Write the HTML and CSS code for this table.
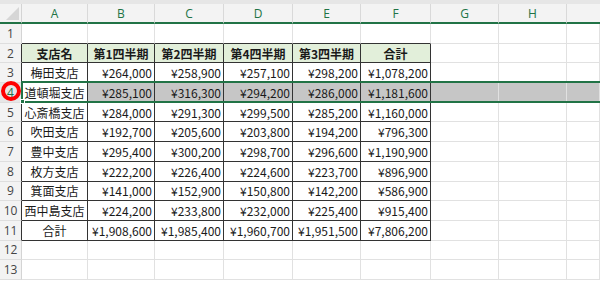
FILE: index.html
```html
<!DOCTYPE html>
<html lang="ja">
<head>
<meta charset="utf-8">
<link rel="stylesheet" href="styles.css">
</head>
<body>
<div class="sheet">
  <div class="topbar"></div>
  <div class="grid">
    <div class="corner"><span class="tri"></span></div>
    <div class="ch">A</div><div class="ch">B</div><div class="ch">C</div><div class="ch">D</div><div class="ch">E</div><div class="ch">F</div><div class="ch">G</div><div class="ch">H</div><div class="ch last"></div>

    <div class="rh">1</div>
    <div class="c top"></div><div class="c top"></div><div class="c top"></div><div class="c top"></div><div class="c top"></div><div class="c top"></div><div class="c"></div><div class="c"></div><div class="c"></div>

    <div class="rh edge">2</div>
    <div class="c t th">支店名</div><div class="c t th">第1四半期</div><div class="c t th">第2四半期</div><div class="c t th">第4四半期</div><div class="c t th">第3四半期</div><div class="c t th">合計</div><div class="c"></div><div class="c"></div><div class="c"></div>

    <div class="rh edge">3</div>
    <div class="c t ctr">梅田支店</div><div class="c t r">¥264,000</div><div class="c t r">¥258,900</div><div class="c t r">¥257,100</div><div class="c t r">¥298,200</div><div class="c t r">¥1,078,200</div><div class="c"></div><div class="c"></div><div class="c"></div>

    <div class="rh edge on">4</div>
    <div class="c t ctr">道頓堀支店</div><div class="c t r g">¥285,100</div><div class="c t r g">¥316,300</div><div class="c t r g">¥294,200</div><div class="c t r g">¥286,000</div><div class="c t r g">¥1,181,600</div><div class="c g"></div><div class="c g"></div><div class="c g"></div>

    <div class="rh edge">5</div>
    <div class="c t ctr">心斎橋支店</div><div class="c t r">¥284,000</div><div class="c t r">¥291,300</div><div class="c t r">¥299,500</div><div class="c t r">¥285,200</div><div class="c t r">¥1,160,000</div><div class="c"></div><div class="c"></div><div class="c"></div>

    <div class="rh edge">6</div>
    <div class="c t ctr">吹田支店</div><div class="c t r">¥192,700</div><div class="c t r">¥205,600</div><div class="c t r">¥203,800</div><div class="c t r">¥194,200</div><div class="c t r">¥796,300</div><div class="c"></div><div class="c"></div><div class="c"></div>

    <div class="rh edge">7</div>
    <div class="c t ctr">豊中支店</div><div class="c t r">¥295,400</div><div class="c t r">¥300,200</div><div class="c t r">¥298,700</div><div class="c t r">¥296,600</div><div class="c t r">¥1,190,900</div><div class="c"></div><div class="c"></div><div class="c"></div>

    <div class="rh edge">8</div>
    <div class="c t ctr">枚方支店</div><div class="c t r">¥222,200</div><div class="c t r">¥226,400</div><div class="c t r">¥224,600</div><div class="c t r">¥223,700</div><div class="c t r">¥896,900</div><div class="c"></div><div class="c"></div><div class="c"></div>

    <div class="rh edge">9</div>
    <div class="c t ctr">箕面支店</div><div class="c t r">¥141,000</div><div class="c t r">¥152,900</div><div class="c t r">¥150,800</div><div class="c t r">¥142,200</div><div class="c t r">¥586,900</div><div class="c"></div><div class="c"></div><div class="c"></div>

    <div class="rh edge">10</div>
    <div class="c t ctr">西中島支店</div><div class="c t r">¥224,200</div><div class="c t r">¥233,800</div><div class="c t r">¥232,000</div><div class="c t r">¥225,400</div><div class="c t r">¥915,400</div><div class="c"></div><div class="c"></div><div class="c"></div>

    <div class="rh edge">11</div>
    <div class="c t ctr">合計</div><div class="c t r">¥1,908,600</div><div class="c t r">¥1,985,400</div><div class="c t r">¥1,960,700</div><div class="c t r">¥1,951,500</div><div class="c t r">¥7,806,200</div><div class="c"></div><div class="c"></div><div class="c"></div>

    <div class="rh">12</div>
    <div class="c"></div><div class="c"></div><div class="c"></div><div class="c"></div><div class="c"></div><div class="c"></div><div class="c"></div><div class="c"></div><div class="c"></div>

    <div class="rh">13</div>
    <div class="c"></div><div class="c"></div><div class="c"></div><div class="c"></div><div class="c"></div><div class="c"></div><div class="c"></div><div class="c"></div><div class="c"></div>
  </div>
  <div class="selection"></div>
  <div class="handle"></div>
  <div class="mark"></div>
</div>
</body>
</html>
```
FILE: styles.css
```css
html, body {
  margin: 0;
  padding: 0;
  background: #ffffff;
  overflow: hidden;
}
.sheet {
  position: relative;
  width: 600px;
  height: 281px;
  overflow: hidden;
  font-family: "Noto Sans CJK JP", "Noto Sans", sans-serif;
}
.topbar {
  height: 4px;
  background: #e6e6e6;
}
.grid {
  display: grid;
  grid-template-columns: 22px 66px 67px 69px 69px 68px 70px 68px 68px 1fr;
  grid-template-rows: 20px repeat(13, 19.7px);
}
.grid > div {
  box-sizing: border-box;
  display: flex;
  align-items: center;
  overflow: hidden;
  white-space: nowrap;
}
.corner {
  background: #f3f3f3;
  border-right: 1px solid #d4d4d4;
  border-bottom: 2px solid #217346;
  position: relative;
}
.tri {
  position: absolute;
  right: 2px;
  bottom: 2px;
  width: 0;
  height: 0;
  border-left: 13px solid transparent;
  border-bottom: 13px solid #d6d6d6;
}
.ch {
  background: #f3f3f3;
  border-right: 1px solid #d9d9d9;
  border-bottom: 2px solid #217346;
  justify-content: center;
  color: #217346;
  font-family: "Open Sans", "Noto Sans", sans-serif;
  font-size: 12px;
}
.ch.last {
  border-right: none;
}
.rh {
  background: #f3f3f3;
  border-right: 1px solid #d4d4d4;
  border-bottom: 1px solid #dedede;
  justify-content: center;
  color: #444444;
  font-family: "Open Sans", "Noto Sans", sans-serif;
  font-size: 12px;
}
.rh.edge {
  border-right-color: #333333;
}
.rh.on {
  background: #e6e6e6;
  color: #217346;
}
.c {
  background: #ffffff;
  border-right: 1px solid #e1e1e1;
  border-bottom: 1px solid #e1e1e1;
  color: #1a1a1a;
  font-size: 12px;
}
.c.top {
  border-bottom-color: #333333;
}
.c.t {
  border-right-color: #333333;
  border-bottom-color: #333333;
}
.c.th {
  background: #e2efda;
  font-weight: bold;
  justify-content: center;
}
.c.ctr {
  justify-content: center;
}
.c.r {
  justify-content: flex-end;
  padding-right: 2px;
}
.c.g {
  background: #c6c6c6;
}
.selection {
  position: absolute;
  left: 21px;
  right: -4px;
  top: 81px;
  height: 22px;
  box-sizing: border-box;
  border: 2px solid #217346;
}
.handle {
  position: absolute;
  left: 20px;
  top: 99px;
  width: 5px;
  height: 5px;
  background: #217346;
  border: 1px solid #ffffff;
  box-sizing: border-box;
}
.mark {
  position: absolute;
  left: 1px;
  top: 81px;
  width: 20px;
  height: 20px;
  box-sizing: border-box;
  border: 4px solid #ff0000;
  border-radius: 50%;
}
```
